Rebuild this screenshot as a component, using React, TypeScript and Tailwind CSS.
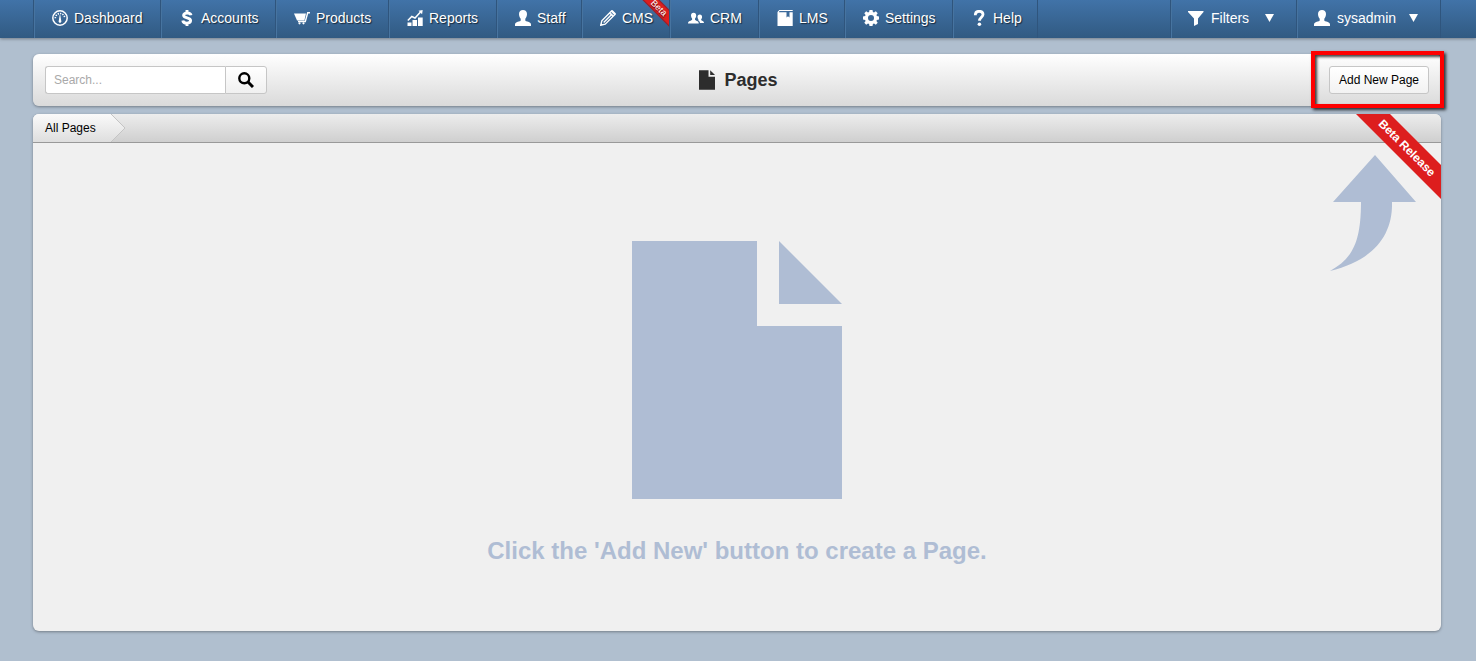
import type { ReactNode } from 'react';

type NavItem = {
  label: string;
  width: string;
  icon: ReactNode;
  beta?: boolean;
  menu?: boolean;
};

function Icon({ children }: { children: ReactNode }) {
  return (
    <svg
      viewBox="0 0 16 16"
      className="h-4 w-4 shrink-0"
      fill="currentColor"
      aria-hidden="true"
    >
      {children}
    </svg>
  );
}

const userIcon = (
  <Icon>
    <path d="M8 0C5.600 0 4 1.500 4 4c0 1.500.6 3.400 1.700 4.700v1.500c0 .6-.4.9-1 1.100C1.800 12 0 12.700 0 14.500V16h16v-1.500c0-1.800-1.800-2.500-4.700-3.200-.6-.2-1-.5-1-1.100V8.700C11.400 7.400 12 5.500 12 4c0-2.500-1.600-4-4-4z" />
  </Icon>
);

const mainItems: NavItem[] = [
  {
    label: 'Dashboard',
    width: 'min-w-[127px]',
    icon: (
      <Icon>
        <circle cx="8" cy="8" r="7.2" fill="none" stroke="currentColor" strokeWidth="1.5" />
        <path
          d="M3.300 8.200a4.700 4.700 0 0 1 9.400 0"
          fill="none"
          stroke="currentColor"
          strokeWidth="1.6"
          strokeDasharray="1.3 1.1"
        />
        <path d="M7.700 5h.6l.9 5.600a1.400 1.400 0 1 1-2.400 0z" />
      </Icon>
    ),
  },
  {
    label: 'Accounts',
    width: 'min-w-[115px]',
    icon: (
      <Icon>
        <path
          d="M12 5.300C11.700 3.600 10.200 3 8.200 3 6 3 4.600 3.900 4.600 5.300c0 3.500 7 1.700 7 5.300 0 1.500-1.500 2.500-3.700 2.500-2.300 0-3.800-.9-4.100-2.700M8 0v3.500M8 12.500V16"
          fill="none"
          stroke="currentColor"
          strokeWidth="2.9"
        />
      </Icon>
    ),
  },
  {
    label: 'Products',
    width: 'min-w-[113px]',
    icon: (
      <Icon>
        <path d="M0 3.500h12l-1.600 7H3z" />
        <path
          d="M16 2.700h-2.300l-2.400 8.800H4"
          fill="none"
          stroke="currentColor"
          strokeWidth="1.4"
        />
        <circle cx="5.5" cy="13.3" r="1.1" />
        <circle cx="9.5" cy="13.3" r="1.1" />
      </Icon>
    ),
  },
  {
    label: 'Reports',
    width: 'min-w-[108px]',
    icon: (
      <Icon>
        <path d="M.5 12.500h4V16h-4zM5.500 10h4.500v6H5.500zM11 7.500h4.700V16H11z" />
        <path
          d="M.8 10.500l4-4L8 8l5.500-6"
          fill="none"
          stroke="currentColor"
          strokeWidth="1.5"
        />
        <path d="M11.500.7L15.700 0l-.6 4.300z" />
      </Icon>
    ),
  },
  { label: 'Staff', width: 'min-w-[85px]', icon: userIcon },
  {
    label: 'CMS',
    width: 'min-w-[88px]',
    beta: true,
    icon: (
      <Icon>
        <path
          d="M.8 15.200l1-4.400 9.700-9.700 3.400 3.400-9.700 9.700zM3.700 12.400l8.600-8.600M9.700 2.900L13 6.200"
          fill="none"
          stroke="currentColor"
          strokeWidth="1.4"
        />
        <path d="M11 1l1.500-1L16 3.500 15 5zM.5 15.500l.6-2.500 1.900 1.900z" />
      </Icon>
    ),
  },
  {
    label: 'CRM',
    width: 'min-w-[89px]',
    icon: (
      <Icon>
        <path d="M5.600 2.700C3.800 2.700 3 3.900 3 5.500c0 1.200.4 2.300 1.100 3.100v1.200C3.800 10.800 0 10.800 0 13.500h10.800c0-2.700-3.500-2.700-3.800-3.700V8.600c.7-.8 1.200-1.900 1.200-3.100 0-1.600-.8-2.800-2.600-2.800z" />
        <path d="M11.800 4.600c-1.500 0-2.300 1-2.300 2.400 0 1 .3 1.800.9 2.500v.9c.9.6 1.500 1.300 1.600 2.600h4c0-2.200-2.600-2.300-2.800-3.100v-.7c.6-.6.9-1.300.9-2.200 0-1.400-.8-2.400-2.300-2.400z" />
      </Icon>
    ),
  },
  {
    label: 'LMS',
    width: 'min-w-[86px]',
    icon: (
      <Icon>
        <path d="M2.300 0H15.700v1H2.500l-.7 1.300H9.500v5.200l1.500-1.300 1.500 1.300V2.300h3.200V16H.5V2z" />
      </Icon>
    ),
  },
  {
    label: 'Settings',
    width: 'min-w-[108px]',
    icon: (
      <Icon>
        <path
          fillRule="evenodd"
          d="M6.500 0h3l.4 2.100 1.100.5L12.800 1.300 14.700 3.200 13.400 5l.5 1.100 2.100.4v3l-2.100.4-.5 1.100 1.300 1.800-1.900 1.900-1.800-1.300-1.100.5L9.500 16h-3l-.4-2.100-1.100-.5-1.800 1.300-1.900-1.900L2.600 11l-.5-1.100L0 9.500v-3l2.100-.4L2.600 5 1.300 3.200 3.200 1.300 5 2.600l1.100-.5zM8 5a3 3 0 1 0 0 6 3 3 0 0 0 0-6z"
        />
      </Icon>
    ),
  },
  {
    label: 'Help',
    width: 'min-w-[85px]',
    icon: (
      <Icon>
        <path
          d="M4.300 5.200C4.300 2.600 5.800 1.300 8.200 1.300c2.300 0 3.800 1.200 3.800 3.200 0 2.600-3.500 3-3.500 6.300"
          fill="none"
          stroke="currentColor"
          strokeWidth="2.8"
        />
        <circle cx="8.4" cy="14.200" r="1.8" />
      </Icon>
    ),
  },
];

const userItems: NavItem[] = [
  {
    label: 'Filters',
    width: 'min-w-[126px]',
    menu: true,
    icon: (
      <Icon>
        <path d="M0 1h15.500v1L10 8.500V14l-4 2V8.500L0 2z" />
      </Icon>
    ),
  },
  { label: 'sysadmin', width: 'min-w-[144px]', menu: true, icon: userIcon },
];

function NavLink({ item }: { item: NavItem }) {
  return (
    <a
      href="#"
      className={`relative flex h-[38px] items-center gap-[6px] overflow-hidden border-r border-[#2f557d] pb-[2px] pl-[18px] shadow-[inset_1px_0_0_#4774a0] ${item.width}`}
    >
      {item.icon}
      <span>{item.label}</span>
      {item.beta && (
        <span className="absolute top-[2px] -right-[20px] w-[60px] rotate-45 border border-[#8f2230] bg-[#dd1e1e] text-center text-[9px] leading-[10px]">
          Beta
        </span>
      )}
    </a>
  );
}

function NavMenu({ item }: { item: NavItem }) {
  return (
    <button
      type="button"
      className={`flex h-[38px] items-center gap-[7px] border-r border-[#2f557d] pr-[22px] pb-[2px] pl-[17px] shadow-[inset_1px_0_0_#4774a0] ${item.width}`}
    >
      {item.icon}
      <span>{item.label}</span>
      <svg viewBox="0 0 9 8" className="ml-auto h-2 w-[9px]" fill="currentColor" aria-hidden="true">
        <path d="M0 0h9L4.500 8z" />
      </svg>
    </button>
  );
}

function PageIcon({ className }: { className: string }) {
  return (
    <svg viewBox="0 0 210 258" className={className} fill="currentColor" aria-hidden="true">
      <path d="M0 0h125v85h85v173H0z" />
      <path d="M147 0l63 63h-63z" />
    </svg>
  );
}

function App() {
  return (
    <div className="min-h-screen bg-[#b0bfcf] font-['Liberation_Sans',Arial,sans-serif] text-xs text-black">
      <nav className="flex h-[38px] justify-between bg-linear-to-b from-[#4173a8] to-[#315a82] pr-[35px] pl-[33px] text-sm text-white shadow-[0_1px_3px_rgba(0,0,0,0.35)] [text-shadow:1px_1px_1px_rgba(0,0,0,0.6)]">
        <div className="flex border-l border-[#2f557d]">
          {mainItems.map((item) => (
            <NavLink key={item.label} item={item} />
          ))}
        </div>
        <div className="flex border-l border-[#2f557d]">
          {userItems.map((item) => (
            <NavMenu key={item.label} item={item} />
          ))}
        </div>
      </nav>

      <main className="mr-[35px] ml-[33px] pt-4 pb-[30px]">
        <header className="grid h-[52px] grid-cols-[1fr_auto_1fr] items-center rounded-md bg-linear-to-b from-white to-[#dadada] px-3 shadow-[0_1px_3px_rgba(0,0,0,0.35)]">
          <form className="flex h-7" onSubmit={(e) => e.preventDefault()}>
            <input
              type="text"
              aria-label="Search"
              placeholder="Search..."
              className="w-[180px] rounded-l-[3px] border border-r-0 border-[#c6c6c6] bg-white px-2 placeholder:text-[#a9a9a9]"
            />
            <button
              type="submit"
              aria-label="Search"
              className="flex w-[42px] items-center justify-center rounded-r-[3px] border border-[#c6c6c6] bg-linear-to-b from-white to-[#f0f0f0]"
            >
              <Icon>
                <circle cx="6.3" cy="6.3" r="5" fill="none" stroke="currentColor" strokeWidth="2.4" />
                <path d="M9.800 9.800l5.200 5.200" stroke="currentColor" strokeWidth="3" />
              </Icon>
            </button>
          </form>
          <h1 className="flex items-center gap-[9px] pl-[3px] text-lg font-bold text-[#2d2d2d]">
            <PageIcon className="h-5 w-4" />
            Pages
          </h1>
          <div className="relative justify-self-end">
            <button
              type="button"
              className="h-7 min-w-[100px] rounded-[3px] border border-[#c6c6c6] bg-linear-to-b from-white to-[#f2f2f2] px-2"
            >
              Add New Page
            </button>
            <div className="pointer-events-none absolute -top-[15px] -right-[15px] -bottom-[14px] -left-[18px] border-4 border-[#fe0000] shadow-[2px_2px_3px_rgba(0,0,0,0.75),inset_2px_2px_3px_rgba(0,0,0,0.75)]" />
          </div>
        </header>

        <section className="relative mt-2 overflow-hidden rounded-md bg-[#f0f0f0] shadow-[0_1px_3px_rgba(0,0,0,0.35)]">
          <div className="flex h-[29px] border-b border-[#999] bg-linear-to-b from-[#ededed] to-[#cfcfcf]">
            <a href="#" className="flex items-center bg-linear-to-b from-[#fafafa] to-[#dedede] pr-[15px] pl-3">
              All Pages
            </a>
            <svg viewBox="0 0 15 28" className="h-7 w-[15px]" aria-hidden="true">
              <defs>
                <linearGradient id="crumb" x2="0" y2="1">
                  <stop stopColor="#fafafa" />
                  <stop offset="1" stopColor="#dedede" />
                </linearGradient>
              </defs>
              <path d="M0 0l14 14L0 28z" fill="url(#crumb)" />
              <path d="M0 0l14 14L0 28" fill="none" stroke="#c4c4c4" />
            </svg>
          </div>

          <div className="flex flex-col items-center pt-[98px] pb-16 text-[#afbdd4]">
            <PageIcon className="h-[258px] w-[210px]" />
            <p className="mt-9 text-2xl font-bold">
              Click the 'Add New' button to create a Page.
            </p>
          </div>

          <svg
            viewBox="0 0 86 116"
            className="absolute top-[41px] right-[25px] h-[116px] w-[86px] text-[#afbdd4]"
            fill="currentColor"
            aria-hidden="true"
          >
            <path d="M45 0l41 47H62c1 32-17 58-62 69 21-12 31-26 31-69H3z" />
          </svg>
          <div className="absolute top-[22px] -right-[41px] w-[150px] rotate-45 bg-[#dd1e1e] text-center text-xs leading-6 font-bold text-white">
            Beta Release
          </div>
        </section>
      </main>
    </div>
  );
}

export default App;
